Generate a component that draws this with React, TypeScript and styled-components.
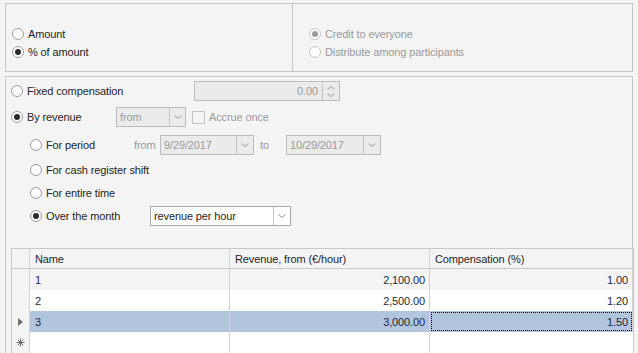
import React from "react";
import styled, { createGlobalStyle } from "styled-components";

const GlobalStyle = createGlobalStyle`
  html, body {
    margin: 0;
    padding: 0;
    background: #f4f4f4;
    overflow: hidden;
  }
  body {
    font-family: "Liberation Sans", Arial, sans-serif;
    font-size: 11px;
    letter-spacing: -0.12px;
    color: #252525;
  }
`;

const Page = styled.div`
  width: 638px;
  height: 353px;
  padding: 3px 5px 0 5px;
  box-sizing: border-box;
  display: flex;
  flex-direction: column;
  gap: 4px;
  overflow: hidden;
`;

const Group = styled.div`
  border: 1px solid #c6c6c6;
  box-sizing: border-box;
`;

const TopGroup = styled(Group)`
  height: 70px;
  display: grid;
  grid-template-columns: 286px 1fr;
`;

const TopCol = styled.div<{ $divider?: boolean; $pad: number }>`
  padding: 21px 0 0 ${(p) => p.$pad}px;
  border-left: ${(p) => (p.$divider ? "1px solid #c6c6c6" : "none")};
  display: flex;
  flex-direction: column;
`;

const BottomGroup = styled(Group)`
  flex: 1;
  padding: 3px 3px 0 5px;
  display: flex;
  flex-direction: column;
  border-bottom: none;
`;

const Row = styled.div<{ $top?: number; $indent?: number; $h?: number }>`
  display: flex;
  align-items: center;
  height: ${(p) => p.$h ?? 22}px;
  margin-top: ${(p) => p.$top ?? 0}px;
  padding-left: ${(p) => p.$indent ?? 0}px;
`;

const RadioLabel = styled.label<{ $w?: number; $disabled?: boolean }>`
  display: flex;
  align-items: center;
  gap: 4px;
  width: ${(p) => (p.$w ? `${p.$w}px` : "auto")};
  flex-shrink: 0;
  color: ${(p) => (p.$disabled ? "#9a9a9a" : "#252525")};
  white-space: nowrap;
`;

const RadioCircle = styled.span<{ $checked?: boolean; $disabled?: boolean }>`
  width: 12px;
  height: 12px;
  border-radius: 50%;
  border: 1px solid ${(p) => (p.$disabled ? "#c4c4c4" : "#9c9c9c")};
  background: #fff;
  box-sizing: border-box;
  display: flex;
  align-items: center;
  justify-content: center;
  &::after {
    content: "";
    display: ${(p) => (p.$checked ? "block" : "none")};
    width: 6px;
    height: 6px;
    border-radius: 50%;
    background: ${(p) => (p.$disabled ? "#9a9a9a" : "#2a2a2a")};
  }
`;

const RadioRow = styled.div`
  height: 18px;
  display: flex;
  align-items: center;
`;

const Box = styled.div<{ $w: number; $disabled?: boolean; $h?: number }>`
  width: ${(p) => p.$w}px;
  height: ${(p) => p.$h ?? 20}px;
  box-sizing: border-box;
  border: 1px solid ${(p) => (p.$disabled ? "#bcbcbc" : "#a9a9a9")};
  background: ${(p) => (p.$disabled ? "#ebebeb" : "#ffffff")};
  color: ${(p) => (p.$disabled ? "#9a9a9a" : "#252525")};
  display: flex;
  flex-shrink: 0;
`;

const BoxText = styled.div<{ $right?: boolean }>`
  flex: 1;
  display: flex;
  align-items: center;
  justify-content: ${(p) => (p.$right ? "flex-end" : "flex-start")};
  padding: 0 4px 0 3px;
  white-space: nowrap;
  overflow: hidden;
`;

const BoxButton = styled.div<{ $w?: number }>`
  width: ${(p) => p.$w ?? 15}px;
  border-left: 1px solid #c4c4c4;
  display: flex;
  flex-direction: column;
  align-items: center;
  justify-content: center;
  gap: 3px;
`;

const Check = styled.span`
  width: 13px;
  height: 13px;
  border: 1px solid #c4c4c4;
  background: #f4f4f4;
  box-sizing: border-box;
  margin: 0 4px 0 6px;
`;

const Muted = styled.span<{ $w?: number; $pl?: number }>`
  color: #9a9a9a;
  width: ${(p) => (p.$w ? `${p.$w}px` : "auto")};
  padding-left: ${(p) => p.$pl ?? 0}px;
  box-sizing: border-box;
  flex-shrink: 0;
  white-space: nowrap;
`;

const Chevron = ({ up = false }: { up?: boolean }) => (
  <svg width="8" height="4" viewBox="0 0 8 4" style={{ display: "block" }}>
    <path
      d={up ? "M0.5 3.5 L4 0.5 L7.5 3.5" : "M0.5 0.5 L4 3.5 L7.5 0.5"}
      fill="none"
      stroke="#b4b4b4"
      strokeWidth="1.1"
    />
  </svg>
);

const Grid = styled.div`
  margin-top: 21px;
  width: 621px;
  border: 1px solid #c8c8c8;
  border-bottom: none;
  display: grid;
  grid-template-columns: 18px 200px 200px 1fr;
  background: #fff;
`;

const Cell = styled.div<{
  $bg?: string;
  $right?: boolean;
  $focus?: boolean;
  $head?: boolean;
}>`
  height: ${(p) => (p.$head ? 20 : 21)}px;
  box-sizing: border-box;
  border-right: 1px solid #d2d2d2;
  border-bottom: ${(p) => (p.$head ? "1px solid #c8c8c8" : "none")};
  background: ${(p) => p.$bg ?? "#fff"};
  display: flex;
  align-items: center;
  justify-content: ${(p) => (p.$right ? "flex-end" : "flex-start")};
  padding: 0 4px 0 5px;
  white-space: nowrap;
  color: ${(p) => (p.$head ? "#252525" : "#1c2a3a")};
  outline: ${(p) => (p.$focus ? "1px dotted #000" : "none")};
  outline-offset: -2px;
  &:last-child {
    border-right: none;
  }
`;

const Indicator = styled(Cell)`
  padding: 0;
  justify-content: center;
  background: #f4f4f4;
`;

const rows = [
  { name: "1", rev: "2,100.00", comp: "1.00", bg: "#f4f4f4" },
  { name: "2", rev: "2,500.00", comp: "1.20", bg: "#ffffff" },
  { name: "3", rev: "3,000.00", comp: "1.50", bg: "#b1c5de", sel: true },
];

const Radio = ({
  label,
  checked,
  disabled,
  w,
}: {
  label: string;
  checked?: boolean;
  disabled?: boolean;
  w?: number;
}) => (
  <RadioLabel $w={w} $disabled={disabled}>
    <RadioCircle $checked={checked} $disabled={disabled} />
    {label}
  </RadioLabel>
);

const Combo = ({
  w,
  text,
  disabled,
  bw,
}: {
  w: number;
  text: string;
  disabled?: boolean;
  bw?: number;
}) => (
  <Box $w={w} $disabled={disabled}>
    <BoxText>{text}</BoxText>
    <BoxButton $w={bw}>
      <Chevron />
    </BoxButton>
  </Box>
);

const NewRowMark = () => (
  <svg width="9" height="9" viewBox="0 0 9 9">
    <g stroke="#6e6e6e" strokeWidth="1">
      <path d="M4.5 0.5 V8.5" />
      <path d="M0.5 4.5 H8.5" />
      <path d="M1.7 1.7 L7.3 7.3" />
      <path d="M7.3 1.7 L1.7 7.3" />
    </g>
  </svg>
);

export default function App() {
  return (
    <>
      <GlobalStyle />
      <Page>
        <TopGroup>
          <TopCol $pad={6}>
            <RadioRow>
              <Radio label="Amount" />
            </RadioRow>
            <RadioRow>
              <Radio label="% of amount" checked />
            </RadioRow>
          </TopCol>
          <TopCol $divider $pad={16}>
            <RadioRow>
              <Radio label="Credit to everyone" checked disabled />
            </RadioRow>
            <RadioRow>
              <Radio label="Distribute among participants" disabled />
            </RadioRow>
          </TopCol>
        </TopGroup>

        <BottomGroup>
          <Row $top={0} $h={22}>
            <Radio label="Fixed compensation" w={183} />
            <Box $w={146} $disabled>
              <BoxText $right>0.00</BoxText>
              <BoxButton $w={16}>
                <Chevron up />
                <Chevron />
              </BoxButton>
            </Box>
          </Row>
          <Row $top={4}>
            <Radio label="By revenue" checked w={105} />
            <Combo w={70} text="from" disabled />
            <Check />
            <Muted>Accrue once</Muted>
          </Row>
          <Row $top={6} $indent={19}>
            <Radio label="For period" w={104} />
            <Muted $w={26}>from</Muted>
            <Combo w={94} text="9/29/2017" disabled bw={16} />
            <Muted $w={32} $pl={6}>
              to
            </Muted>
            <Combo w={95} text="10/29/2017" disabled bw={16} />
          </Row>
          <Row $top={3} $indent={19}>
            <Radio label="For cash register shift" />
          </Row>
          <Row $top={1} $indent={19}>
            <Radio label="For entire time" />
          </Row>
          <Row $top={1} $indent={19}>
            <Radio label="Over the month" checked w={120} />
            <Combo w={141} text="revenue per hour" bw={16} />
          </Row>

          <Grid>
            <Indicator $head />
            <Cell $head $bg="#f4f4f4">Name</Cell>
            <Cell $head $bg="#f4f4f4">Revenue, from (€/hour)</Cell>
            <Cell $head $bg="#f4f4f4">Compensation (%)</Cell>
            {rows.map((r) => (
              <React.Fragment key={r.name}>
                <Indicator>
                  {r.sel && (
                    <svg width="5" height="8" viewBox="0 0 5 8">
                      <path d="M0 0 L5 4 L0 8 Z" fill="#6e6e6e" />
                    </svg>
                  )}
                </Indicator>
                <Cell $bg={r.bg}>{r.name}</Cell>
                <Cell $bg={r.bg} $right>
                  {r.rev}
                </Cell>
                <Cell $bg={r.bg} $right $focus={r.sel}>
                  {r.comp}
                </Cell>
              </React.Fragment>
            ))}
            <Indicator>
              <NewRowMark />
            </Indicator>
            <Cell />
            <Cell />
            <Cell />
          </Grid>
        </BottomGroup>
      </Page>
    </>
  );
}
